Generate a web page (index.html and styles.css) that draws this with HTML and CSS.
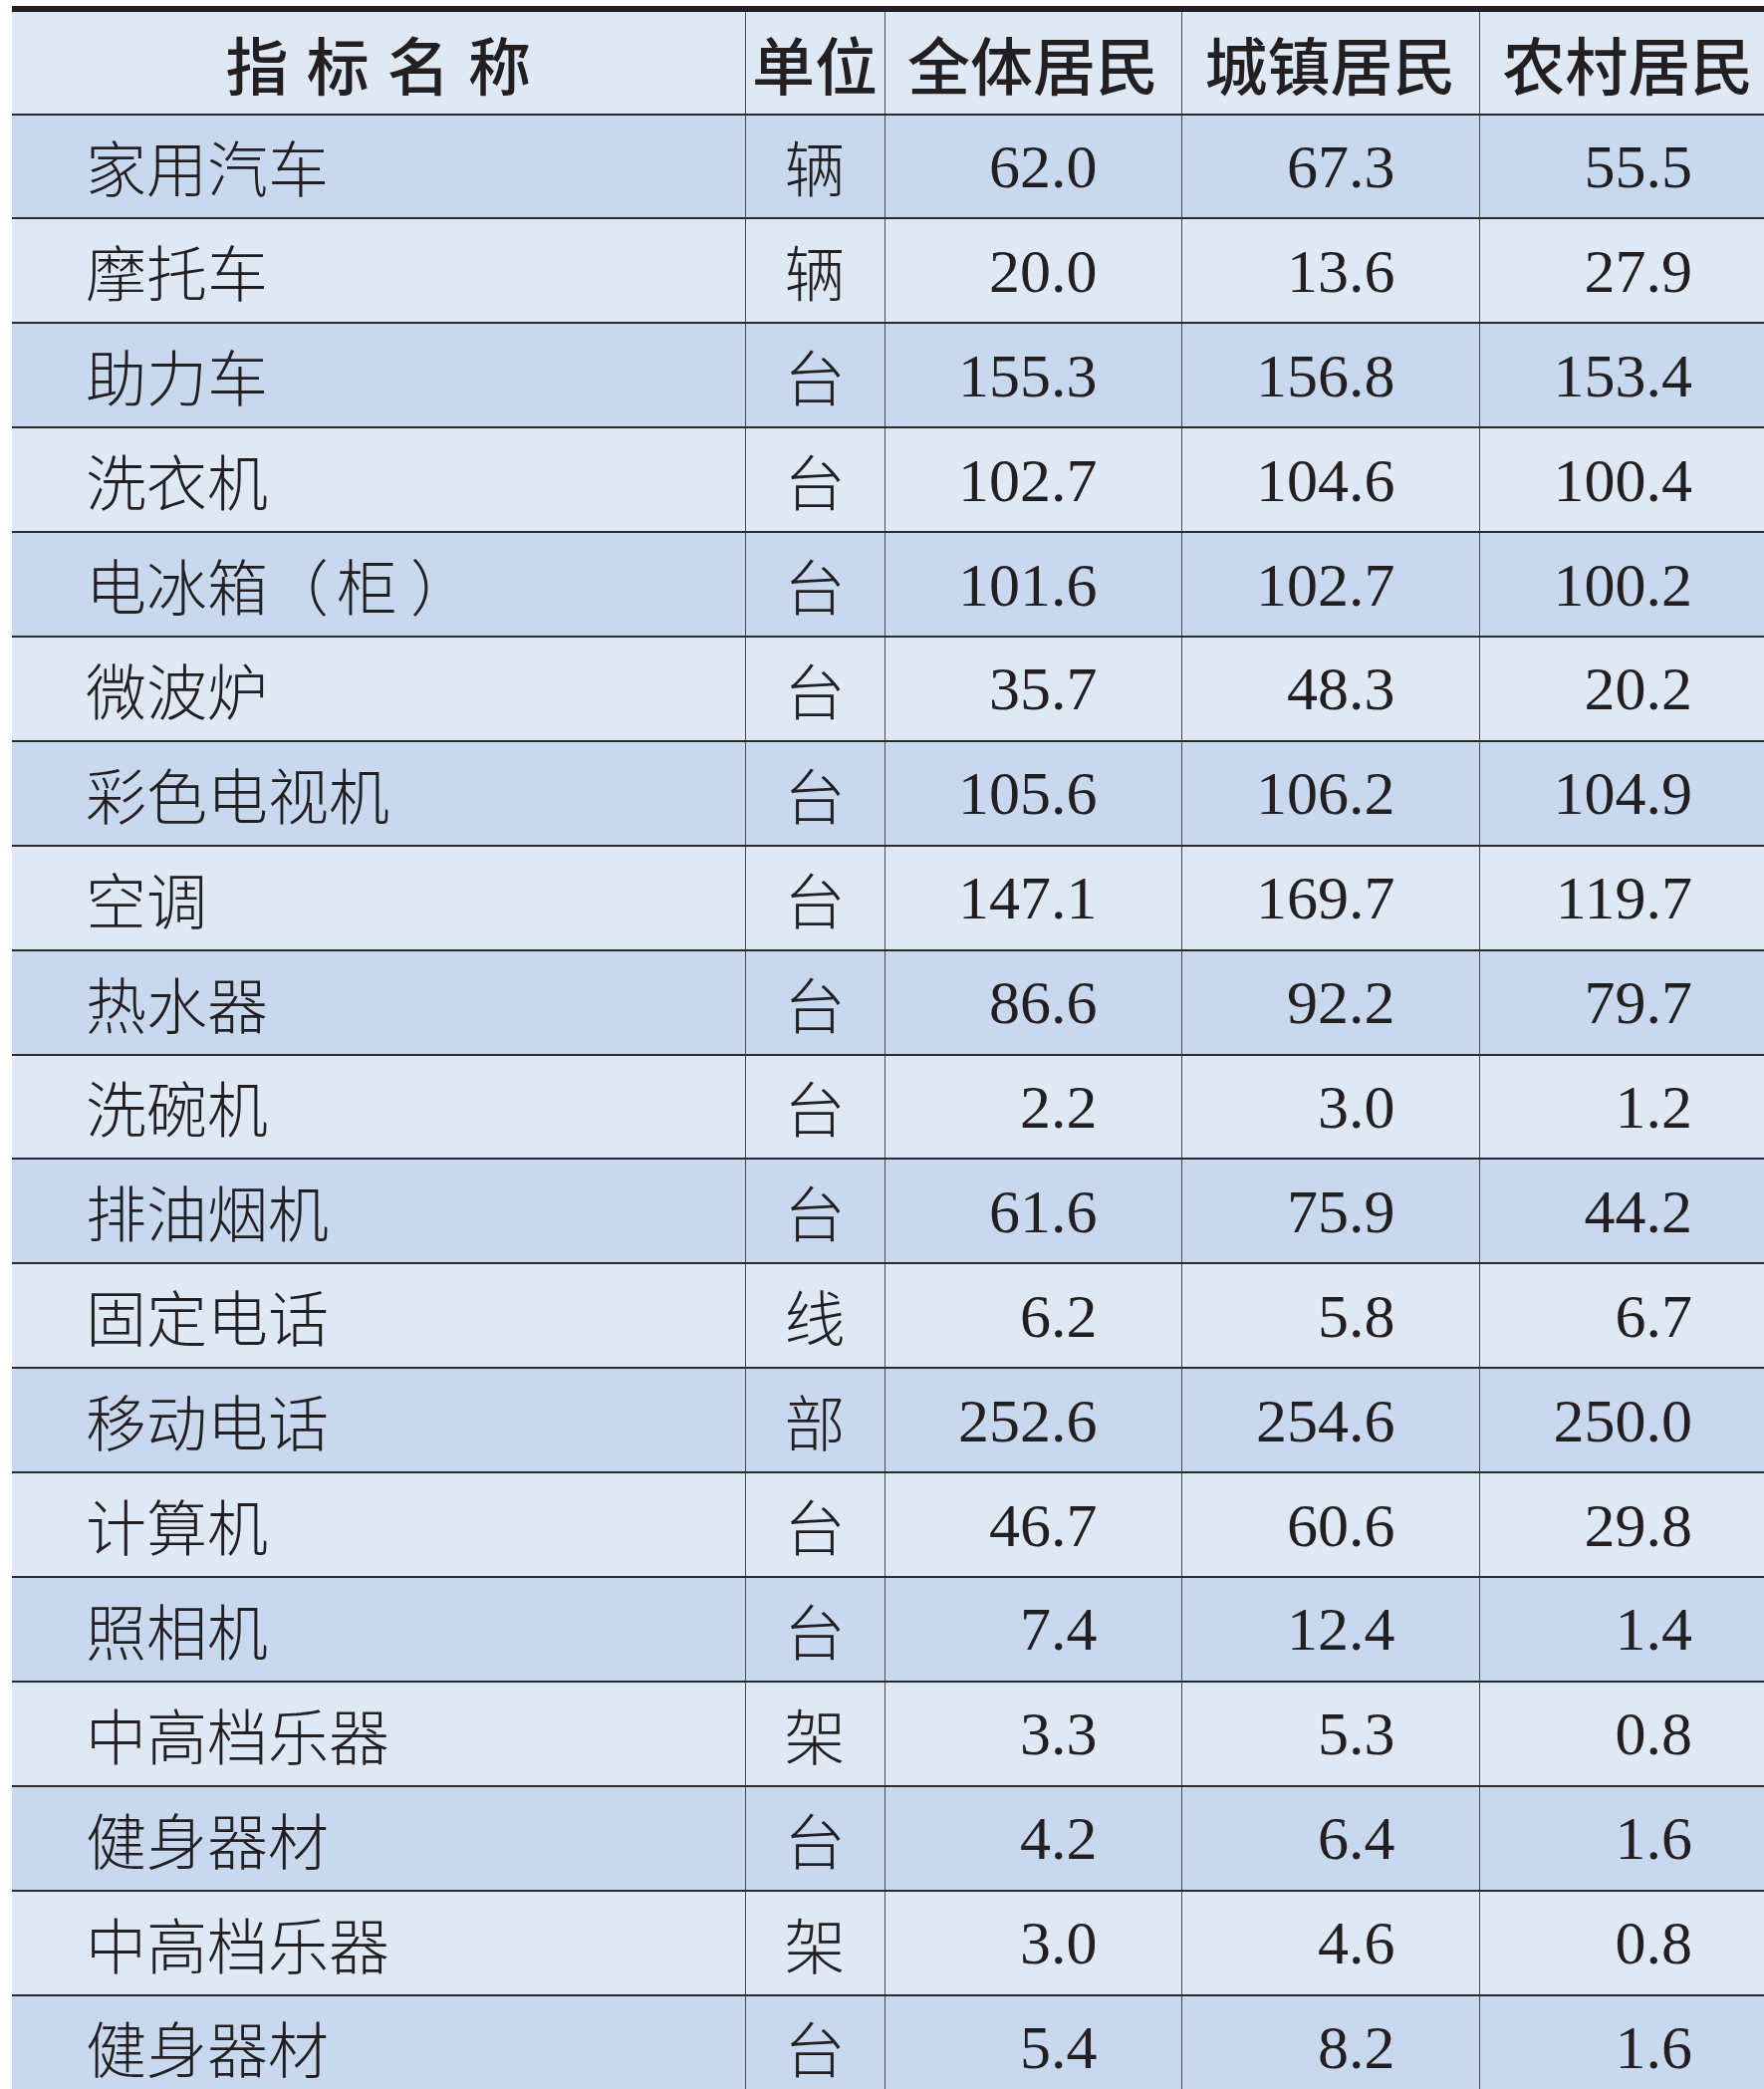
FILE: index.html
```html
<!DOCTYPE html>
<html lang="zh-CN">
<head>
<meta charset="utf-8">
<title>主要耐用消费品拥有量</title>
<link rel="stylesheet" href="styles.css">
</head>
<body>
<table class="stats">
  <colgroup>
    <col class="c-name"><col class="c-unit"><col class="c-num"><col class="c-num2"><col class="c-num">
  </colgroup>
  <thead>
    <tr><th class="h-name">指 标 名 称</th><th>单位</th><th>全体居民</th><th>城镇居民</th><th>农村居民</th></tr>
  </thead>
  <tbody>
    <tr><td class="name">家用汽车</td><td class="unit">辆</td><td class="num">62.0</td><td class="num">67.3</td><td class="num">55.5</td></tr>
    <tr><td class="name">摩托车</td><td class="unit">辆</td><td class="num">20.0</td><td class="num">13.6</td><td class="num">27.9</td></tr>
    <tr><td class="name">助力车</td><td class="unit">台</td><td class="num">155.3</td><td class="num">156.8</td><td class="num">153.4</td></tr>
    <tr><td class="name">洗衣机</td><td class="unit">台</td><td class="num">102.7</td><td class="num">104.6</td><td class="num">100.4</td></tr>
    <tr><td class="name">电冰箱<span class="paren-open">（</span>柜<span class="paren-close">）</span></td><td class="unit">台</td><td class="num">101.6</td><td class="num">102.7</td><td class="num">100.2</td></tr>
    <tr><td class="name">微波炉</td><td class="unit">台</td><td class="num">35.7</td><td class="num">48.3</td><td class="num">20.2</td></tr>
    <tr><td class="name">彩色电视机</td><td class="unit">台</td><td class="num">105.6</td><td class="num">106.2</td><td class="num">104.9</td></tr>
    <tr><td class="name">空调</td><td class="unit">台</td><td class="num">147.1</td><td class="num">169.7</td><td class="num">119.7</td></tr>
    <tr><td class="name">热水器</td><td class="unit">台</td><td class="num">86.6</td><td class="num">92.2</td><td class="num">79.7</td></tr>
    <tr><td class="name">洗碗机</td><td class="unit">台</td><td class="num">2.2</td><td class="num">3.0</td><td class="num">1.2</td></tr>
    <tr><td class="name">排油烟机</td><td class="unit">台</td><td class="num">61.6</td><td class="num">75.9</td><td class="num">44.2</td></tr>
    <tr><td class="name">固定电话</td><td class="unit">线</td><td class="num">6.2</td><td class="num">5.8</td><td class="num">6.7</td></tr>
    <tr><td class="name">移动电话</td><td class="unit">部</td><td class="num">252.6</td><td class="num">254.6</td><td class="num">250.0</td></tr>
    <tr><td class="name">计算机</td><td class="unit">台</td><td class="num">46.7</td><td class="num">60.6</td><td class="num">29.8</td></tr>
    <tr><td class="name">照相机</td><td class="unit">台</td><td class="num">7.4</td><td class="num">12.4</td><td class="num">1.4</td></tr>
    <tr><td class="name">中高档乐器</td><td class="unit">架</td><td class="num">3.3</td><td class="num">5.3</td><td class="num">0.8</td></tr>
    <tr><td class="name">健身器材</td><td class="unit">台</td><td class="num">4.2</td><td class="num">6.4</td><td class="num">1.6</td></tr>
    <tr><td class="name">中高档乐器</td><td class="unit">架</td><td class="num">3.0</td><td class="num">4.6</td><td class="num">0.8</td></tr>
    <tr><td class="name">健身器材</td><td class="unit">台</td><td class="num">5.4</td><td class="num">8.2</td><td class="num">1.6</td></tr>
  </tbody>
</table>
</body>
</html>
```

FILE: styles.css
```css
html, body {
  margin: 0;
  padding: 0;
  background: #ffffff;
  overflow: hidden;
}

body {
  padding: 6px 0 0 12px;
  width: 1771px;
  color: #231f20;
  font-family: "Noto Sans CJK SC", "Noto Sans", sans-serif;
}

.stats {
  border-collapse: collapse;
  table-layout: fixed;
  width: 1771px;
  border-top: 6px solid #231f20;
}

.c-name { width: 736px; }
.c-unit { width: 140px; }
.c-num  { width: 298px; }
.c-num2 { width: 299px; }

.stats th,
.stats td {
  padding: 0;
  border-bottom: 2px solid #2a2a2a;
  border-left: 1.5px solid #4a4a4a;
  white-space: nowrap;
  overflow: hidden;
}

.stats th:first-child,
.stats td:first-child {
  border-left: none;
}

.stats th {
  height: 101.5px;
  background: #dfe9f6;
  font-family: "Noto Sans CJK SC", sans-serif;
  font-weight: 500;
  font-size: 63px;
  line-height: 1;
  text-align: center;
}

.stats th.h-name {
  word-spacing: 4px;
}

.stats td {
  height: 102.9px;
  background: #dfe9f6;
  vertical-align: middle;
}

.stats tbody tr:nth-child(odd) td {
  background: #c8d8ef;
}

.name {
  padding-left: 74px !important;
  font-size: 61px;
  font-weight: 300;
  line-height: 1;
  text-align: left;
}

.paren-open {
  margin-right: 8px;
}

.paren-close {
  margin-left: 13px;
}

.unit {
  font-size: 61px;
  font-weight: 300;
  line-height: 1;
  text-align: center;
}

.num {
  padding-right: 84px !important;
  font-family: "Liberation Serif", "Times New Roman", serif;
  font-size: 62px;
  line-height: 1;
  text-align: right;
}
```
